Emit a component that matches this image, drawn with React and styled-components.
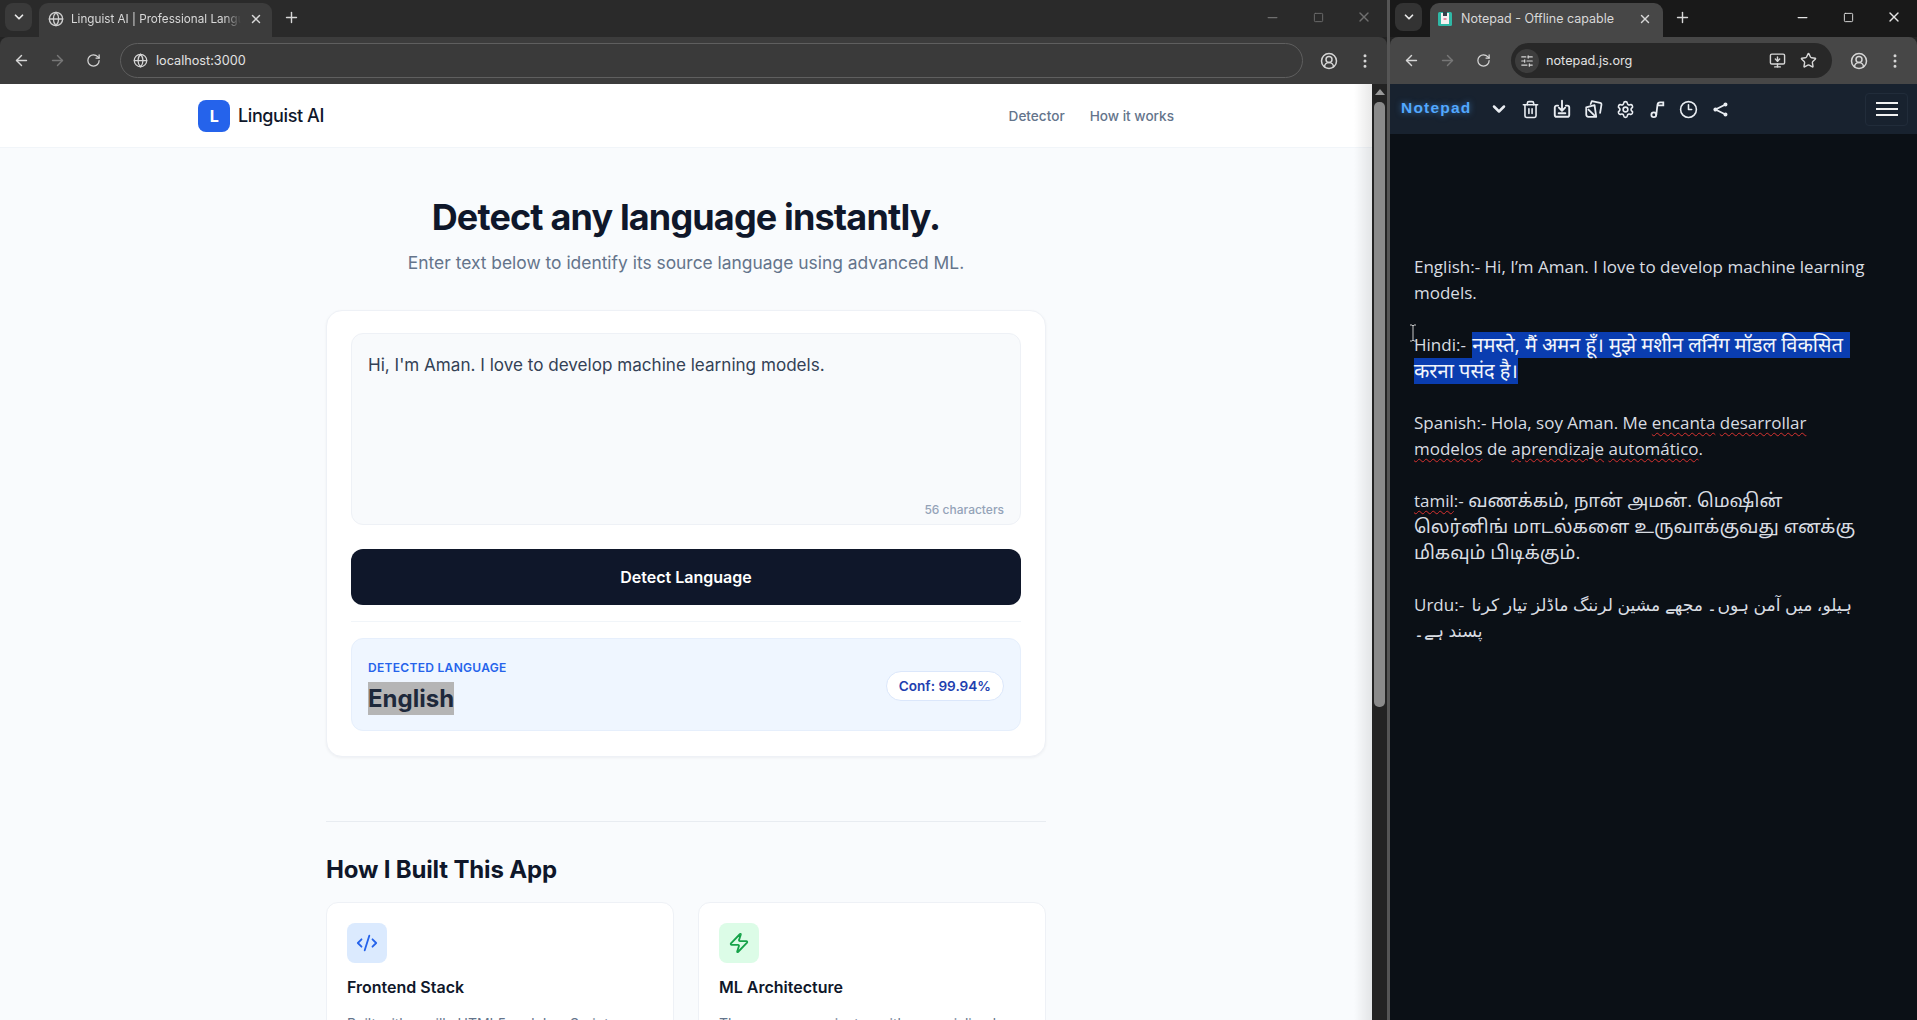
import React from 'react'
import styled, { createGlobalStyle } from 'styled-components'
import {
  ArrowLeft, ArrowRight, RotateCw, Globe, ChevronDown, X, Plus, Minus, Square,
  CircleUserRound, EllipsisVertical, SlidersHorizontal, Star, MonitorDown,
  Trash2, Settings, Clock3, CodeXml, Zap,
} from 'lucide-react'

const GlobalStyle = createGlobalStyle`
  html, body { margin: 0; padding: 0; height: 100%; overflow: hidden; background: #232323; }
  * { box-sizing: border-box; }
`

const Desktop = styled.div`
  display: flex;
  width: 1917px;
  height: 1020px;
  overflow: hidden;
  font-family: Inter, "Liberation Sans", sans-serif;
`

const Window = styled.div`
  display: flex;
  flex-direction: column;
  width: ${(p) => p.$width}px;
  flex: none;
  height: 100%;
`

const Seam = styled.div`
  width: 3px;
  flex: none;
  background: #555;
`

/* browser chrome */
const TabStrip = styled.div`
  display: flex;
  align-items: flex-start;
  height: 37px;
  flex: none;
  padding: 3px 0 0 5px;
  background: ${(p) => p.$bg};
`

const ListBtn = styled.div`
  display: flex;
  align-items: center;
  justify-content: center;
  width: 27px;
  height: 28px;
  flex: none;
  border-radius: 8px;
  color: #e8e8e8;
  background: ${(p) => p.$bg};
`

const Tab = styled.div`
  display: flex;
  align-items: center;
  width: 233px;
  height: 34px;
  flex: none;
  margin-left: ${(p) => p.$left}px;
  padding: ${(p) => p.$pad};
  border-radius: 9px 9px 0 0;
  background: ${(p) => p.$bg};
  color: #d8d8d8;
`

const TabIcon = styled.span`
  display: flex;
  width: 16px;
  margin-right: ${(p) => p.$gap}px;
  flex: none;
  color: #cfcfcf;
`

const TabTitle = styled.span`
  flex: 1;
  min-width: 0;
  overflow: hidden;
  white-space: nowrap;
  font-size: ${(p) => p.$size}px;
  mask-image: ${(p) => (p.$fade ? 'linear-gradient(to right, #000 90%, transparent)' : 'none')};
`

const TabClose = styled.span`
  display: flex;
  margin-left: 8px;
`

const NewTab = styled.span`
  display: flex;
  margin-left: 11px;
  margin-top: 6px;
  color: #d8d8d8;
`

const Caption = styled.div`
  display: flex;
  margin-left: auto;
`

const CaptionBtn = styled.span`
  display: flex;
  align-items: center;
  justify-content: center;
  width: 46px;
  height: 28px;
  color: ${(p) => p.$color};
`

const Toolbar = styled.div`
  display: flex;
  align-items: center;
  height: 47px;
  flex: none;
  padding-left: 3px;
  background: ${(p) => p.$bg};
  border-radius: 8px 8px 0 0;
`

const NavBtn = styled.span`
  display: flex;
  align-items: center;
  justify-content: center;
  width: 36px;
  height: 36px;
  flex: none;
  color: ${(p) => (p.$off ? '#777' : '#d6d6d6')};
`

const Address = styled.div`
  display: flex;
  align-items: center;
  height: 35px;
  width: ${(p) => p.$width}px;
  flex: none;
  margin: 0 ${(p) => p.$right}px 0 ${(p) => p.$left}px;
  padding: 0 12px 0 ${(p) => p.$padLeft}px;
  border-radius: 18px;
  border: ${(p) => (p.$outlined ? '1.5px solid #5f5f5f' : 'none')};
  background: ${(p) => p.$bg};
  color: #e2e2e2;
  font-size: 12.7px;
`

const SiteIcon = styled.span`
  display: flex;
  align-items: center;
  justify-content: center;
  width: 24px;
  height: 24px;
  flex: none;
  margin-right: ${(p) => p.$gap}px;
  border-radius: 50%;
  background: ${(p) => p.$bg || 'transparent'};
  color: #d6d6d6;
`

const AddressActions = styled.span`
  display: flex;
  gap: 14px;
  margin-left: auto;
  padding-right: 3px;
  color: #d6d6d6;
`

/* linguist page */
const Viewport = styled.div`
  display: flex;
  flex: 1;
  min-height: 0;
`

const Page = styled.div`
  position: relative;
  flex: 1;
  overflow: hidden;
  background: #f9fbfd;

  &::after {
    content: '';
    position: absolute;
    top: 0;
    right: 0;
    bottom: 0;
    width: 18px;
    background: linear-gradient(to right, transparent, rgba(0, 0, 0, 0.09));
  }
`

const Scrollbar = styled.div`
  position: relative;
  width: 15px;
  flex: none;
  background: #232323;
`

const ScrollArrow = styled.div`
  position: absolute;
  top: 5px;
  left: 3px;
  width: 0;
  height: 0;
  border-left: 5px solid transparent;
  border-right: 5px solid transparent;
  border-bottom: 6px solid #9a9a9a;
`

const ScrollThumb = styled.div`
  position: absolute;
  top: 18px;
  left: 2px;
  width: 11px;
  height: 605px;
  border-radius: 5px;
  background: #8a8a8a;
`

const Nav = styled.nav`
  height: 64px;
  background: #fff;
  border-bottom: 1px solid #f1f5f9;
`

const NavInner = styled.div`
  display: flex;
  align-items: center;
  justify-content: space-between;
  max-width: 976px;
  height: 100%;
  margin: 0 auto;
`

const Brand = styled.div`
  display: flex;
  align-items: center;
  gap: 8px;
  font-size: 18px;
  font-weight: 500;
  letter-spacing: -0.4px;
  color: #0f172a;
`

const BrandMark = styled.span`
  display: flex;
  align-items: center;
  justify-content: center;
  width: 32px;
  height: 32px;
  border-radius: 8px;
  background: #2563eb;
  color: #fff;
  font-size: 16px;
  font-weight: 700;
`

const NavLinks = styled.div`
  display: flex;
  gap: 25px;
  font-size: 13.6px;
  font-weight: 500;
  color: #64748b;
`

const Main = styled.main`
  width: 720px;
  margin: 0 auto;
  padding-top: 49px;
`

const Title = styled.h1`
  margin: 0;
  font-size: 36px;
  line-height: 40px;
  font-weight: 700;
  letter-spacing: -0.85px;
  text-align: center;
  color: #0f172a;
`

const Subtitle = styled.p`
  margin: 12px 0 33px;
  font-size: 17.4px;
  line-height: 28px;
  text-align: center;
  color: #64748b;
`

const DetectCard = styled.section`
  padding: 22px 24px 25px;
  border: 1px solid #eef1f6;
  border-radius: 16px;
  background: #fff;
  box-shadow: 0 1px 3px rgba(15, 23, 42, 0.05);
`

const TextBox = styled.div`
  position: relative;
  height: 192px;
  padding: 19px 16px;
  border: 1px solid #eef1f6;
  border-radius: 12px;
  background: #f8fafc;
  font-size: 17.1px;
  line-height: 24px;
  color: #334155;
`

const CharCount = styled.span`
  position: absolute;
  right: 16px;
  bottom: 5px;
  font-size: 12px;
  line-height: 18px;
  font-weight: 500;
  color: #94a3b8;
`

const DetectButton = styled.button`
  display: block;
  width: 100%;
  height: 56px;
  margin-top: 24px;
  border: 0;
  border-radius: 12px;
  background: #0f172a;
  color: #fff;
  font-family: inherit;
  font-size: 16px;
  font-weight: 600;
`

const ResultArea = styled.div`
  margin-top: 16px;
  padding-top: 16px;
  border-top: 1px solid #f1f5f9;
`

const ResultPanel = styled.div`
  display: flex;
  align-items: center;
  justify-content: space-between;
  height: 93px;
  padding: 21px 16px 15px;
  border: 1px solid #e6effc;
  border-radius: 12px;
  background: #eff6ff;
`

const ResultLabel = styled.div`
  font-size: 12px;
  line-height: 16px;
  font-weight: 600;
  letter-spacing: 0.3px;
  text-transform: uppercase;
  color: #2563eb;
`

const ResultValue = styled.div`
  display: inline-block;
  margin-top: 6px;
  font-size: 24px;
  line-height: 33px;
  font-weight: 700;
  color: #1e293b;
  background: #b5b5b5;
`

const ConfPill = styled.span`
  display: flex;
  align-items: center;
  height: 30px;
  margin-bottom: 4px;
  padding: 0 12px;
  border: 1px solid #dbe7fb;
  border-radius: 15px;
  background: #fff;
  font-size: 13.6px;
  font-weight: 600;
  color: #1e40af;
`

const BuiltSection = styled.section`
  margin-top: 64px;
  padding-top: 32px;
  border-top: 1px solid #e8ecf1;
`

const BuiltTitle = styled.h2`
  margin: 0 0 16px;
  font-size: 24px;
  line-height: 32px;
  font-weight: 700;
  letter-spacing: -0.17px;
  color: #0f172a;
`

const BuiltGrid = styled.div`
  display: grid;
  grid-template-columns: 1fr 1fr;
  gap: 24px;
`

const BuiltCard = styled.article`
  height: 220px;
  padding: 20px;
  border: 1px solid #eef1f6;
  border-radius: 12px;
  background: #fff;
`

const BuiltIcon = styled.div`
  display: flex;
  align-items: center;
  justify-content: center;
  width: 40px;
  height: 40px;
  border-radius: 8px;
  background: ${(p) => p.$bg};
  color: ${(p) => p.$color};
`

const BuiltName = styled.h3`
  margin: 12px 0 0;
  font-size: 16px;
  line-height: 24px;
  font-weight: 600;
  color: #0f172a;
`

const BuiltText = styled.p`
  margin: 15px 0 0;
  font-size: 14px;
  line-height: 20px;
  color: #64748b;
`

/* notepad page */
const NoteApp = styled.div`
  display: flex;
  flex-direction: column;
  flex: 1;
  min-height: 0;
  background: #0b1016;
`

const NoteBar = styled.div`
  display: flex;
  align-items: center;
  height: 50px;
  flex: none;
  padding: 0 9px 0 11px;
  background: #18222f;
`

const NoteBrand = styled.span`
  width: 71px;
  margin: 0 11px 2px 0;
  flex: none;
  font-family: "Liberation Sans", sans-serif;
  font-size: 15.5px;
  font-weight: 700;
  letter-spacing: 1.2px;
  white-space: nowrap;
  color: #52a8ff;
  text-shadow: 0 0 6px rgba(82, 168, 255, 0.55);
`

const NoteTool = styled.span`
  display: flex;
  align-items: center;
  justify-content: center;
  width: 31.7px;
  height: 32px;
  flex: none;
  color: #e9edf2;
`

const MenuBtn = styled.span`
  display: flex;
  flex-direction: column;
  align-items: center;
  justify-content: center;
  gap: 4px;
  width: 43px;
  height: 33px;
  margin-left: auto;
  border: 1px solid #212c3a;
  border-radius: 4px;
`

const MenuLine = styled.span`
  width: 22px;
  height: 2px;
  background: #f2f2f2;
`

const NoteBody = styled.div`
  position: relative;
  flex: 1;
  padding: 120px 0 0 24px;
  font-family: "Open Sans", "Noto Sans", "Noto Sans Devanagari", "Noto Sans Tamil", "DejaVu Sans", sans-serif;
  font-size: 17px;
  line-height: 26px;
  color: #d9dde2;
`

const NoteLine = styled.div`
  height: 26px;
  white-space: nowrap;
  margin-bottom: ${(p) => (p.$last ? 26 : 0)}px;
`

const Selected = styled.span`
  display: inline-block;
  height: 26px;
  margin-left: ${(p) => p.$left || 0}px;
  padding-right: ${(p) => p.$right || 0}px;
  vertical-align: top;
  font-size: 20px;
  line-height: 26px;
  background: #0a3db0;
  color: #f2f5fb;
`

const Tamil = styled.span`
  font-size: 18.6px;
  line-height: 24px;
`

const Urdu = styled.span`
  margin-left: 3px;
  font-size: 17.2px;
  unicode-bidi: isolate;
`

const Misspelt = styled.span`
  text-decoration: underline wavy #d6322f 1px;
  text-underline-offset: 3px;
`

const TextCursor = styled.svg`
  position: absolute;
  left: 19px;
  top: 190px;
`

const NotepadFavicon = () => (
  <svg width="16" height="16" viewBox="0 0 16 16">
    <rect x="1" y="1" width="14" height="14" rx="1.5" fill="#2fb8a6" />
    <rect x="4" y="2" width="8" height="11" fill="#f4f1f1" />
    <rect x="6" y="1" width="4" height="4" fill="#33404a" />
    <rect x="6.5" y="7" width="3" height="2" fill="#e58aa3" />
  </svg>
)

const ImportIcon = () => (
  <svg width="20" height="20" viewBox="0 0 18 18" fill="none" stroke="currentColor" strokeWidth="1.7" strokeLinecap="round" strokeLinejoin="round">
    <path d="M5.500 6H4.200A1.700 1.700 0 0 0 2.500 7.700v6.600A1.700 1.700 0 0 0 4.200 16h9.600a1.700 1.700 0 0 0 1.700-1.700V7.700A1.700 1.700 0 0 0 13.800 6H12.500" />
    <path d="M9 1.500v8.500M6.200 7.800 9 10.600l2.800-2.800" />
    <path d="M6 12.800h6" />
  </svg>
)

const SheetsIcon = () => (
  <svg width="20" height="20" viewBox="0 0 18 18" fill="none" stroke="currentColor" strokeWidth="1.6" strokeLinejoin="round" strokeLinecap="round">
    <path d="M2 7.500 9.500 5.500 11 16H4A2 2 0 0 1 2 14Z" />
    <path d="M6 4.500 7 2l7.500 1.500a1.500 1.500 0 0 1 1.200 1.800L14.500 12.500" />
    <path d="M4 9.500 9.500 15" />
  </svg>
)

const NoteIcon = () => (
  <svg width="19" height="19" viewBox="0 0 18 18" fill="none" stroke="currentColor" strokeWidth="1.700" strokeLinecap="round">
    <circle cx="5.500" cy="14" r="2.300" />
    <path d="M7.800 14 9 4.500A2.500 2.500 0 0 1 11.500 2.300H14.500V5H10" />
  </svg>
)

const ShareIcon = () => (
  <svg width="15" height="15" viewBox="0 0 18 18" fill="currentColor" stroke="currentColor" strokeWidth="2.200">
    <path d="M15 3 3 9l12 6" fill="none" />
    <circle cx="15" cy="3" r="1.300" />
    <circle cx="3" cy="9" r="1.400" />
    <circle cx="15" cy="15" r="1.300" />
  </svg>
)

function App() {
  return (
    <Desktop>
      <GlobalStyle />
      <Window $width={1387}>
        <TabStrip $bg="#2a2a2a">
          <ListBtn $bg="#3a3a3a"><ChevronDown size={14} strokeWidth={3} /></ListBtn>
          <Tab $bg="#3c3c3c" $left={7} $pad="0 9px 3px 9px">
            <TabIcon $gap={7}><Globe size={16} /></TabIcon>
            <TabTitle $size={11.7} $fade>Linguist AI | Professional Language Detector</TabTitle>
            <TabClose><X size={14} strokeWidth={2.5} /></TabClose>
          </Tab>
          <NewTab><Plus size={17} /></NewTab>
          <Caption>
            <CaptionBtn $color="#6f6f6f"><Minus size={15} /></CaptionBtn>
            <CaptionBtn $color="#6f6f6f"><Square size={11} /></CaptionBtn>
            <CaptionBtn $color="#6f6f6f"><X size={16} /></CaptionBtn>
          </Caption>
        </TabStrip>
        <Toolbar $bg="#3c3c3c">
          <NavBtn><ArrowLeft size={17} /></NavBtn>
          <NavBtn $off><ArrowRight size={17} /></NavBtn>
          <NavBtn><RotateCw size={15} /></NavBtn>
          <Address $width={1183} $left={9} $right={8} $padLeft={7} $outlined $bg="#3a3a3a">
            <SiteIcon $gap={4}><Globe size={15} /></SiteIcon>
            localhost:3000
          </Address>
          <NavBtn><CircleUserRound size={18} /></NavBtn>
          <NavBtn><EllipsisVertical size={18} /></NavBtn>
        </Toolbar>
        <Viewport>
          <Page>
            <Nav>
              <NavInner>
                <Brand><BrandMark>L</BrandMark>Linguist AI</Brand>
                <NavLinks><span>Detector</span><span>How it works</span></NavLinks>
              </NavInner>
            </Nav>
            <Main>
              <Title>Detect any language instantly.</Title>
              <Subtitle>Enter text below to identify its source language using advanced ML.</Subtitle>
              <DetectCard>
                <TextBox>
                  Hi, I'm Aman. I love to develop machine learning models.
                  <CharCount>56 characters</CharCount>
                </TextBox>
                <DetectButton>Detect Language</DetectButton>
                <ResultArea>
                  <ResultPanel>
                    <div>
                      <ResultLabel>Detected Language</ResultLabel>
                      <ResultValue>English</ResultValue>
                    </div>
                    <ConfPill>Conf: 99.94%</ConfPill>
                  </ResultPanel>
                </ResultArea>
              </DetectCard>
              <BuiltSection>
                <BuiltTitle>How I Built This App</BuiltTitle>
                <BuiltGrid>
                  <BuiltCard>
                    <BuiltIcon $bg="#dbeafe" $color="#2563eb"><CodeXml size={22} /></BuiltIcon>
                    <BuiltName>Frontend Stack</BuiltName>
                    <BuiltText>Built with vanilla HTML5 and JavaScript</BuiltText>
                  </BuiltCard>
                  <BuiltCard>
                    <BuiltIcon $bg="#dcfce7" $color="#16a34a"><Zap size={22} /></BuiltIcon>
                    <BuiltName>ML Architecture</BuiltName>
                    <BuiltText>The app communicates with a specialized</BuiltText>
                  </BuiltCard>
                </BuiltGrid>
              </BuiltSection>
            </Main>
          </Page>
          <Scrollbar>
            <ScrollArrow />
            <ScrollThumb />
          </Scrollbar>
        </Viewport>
      </Window>
      <Seam />
      <Window $width={527}>
        <TabStrip $bg="#191919">
          <ListBtn $bg="#333"><ChevronDown size={14} strokeWidth={3} /></ListBtn>
          <Tab $bg="#474747" $left={8} $pad="0 11px 3px 7px">
            <TabIcon $gap={8}><NotepadFavicon /></TabIcon>
            <TabTitle $size={12.5}>Notepad - Offline capable</TabTitle>
            <TabClose><X size={14} strokeWidth={2.5} /></TabClose>
          </Tab>
          <NewTab><Plus size={17} /></NewTab>
          <Caption>
            <CaptionBtn $color="#e4e4e4"><Minus size={15} /></CaptionBtn>
            <CaptionBtn $color="#e4e4e4"><Square size={11} /></CaptionBtn>
            <CaptionBtn $color="#e4e4e4"><X size={16} /></CaptionBtn>
          </Caption>
        </TabStrip>
        <Toolbar $bg="#474747">
          <NavBtn><ArrowLeft size={17} /></NavBtn>
          <NavBtn $off><ArrowRight size={17} /></NavBtn>
          <NavBtn><RotateCw size={15} /></NavBtn>
          <Address $width={321} $left={10} $right={9} $padLeft={4} $bg="#282828">
            <SiteIcon $gap={7} $bg="#3d3d3d"><SlidersHorizontal size={14} /></SiteIcon>
            notepad.js.org
            <AddressActions><MonitorDown size={17} /><Star size={17} /></AddressActions>
          </Address>
          <NavBtn><CircleUserRound size={18} /></NavBtn>
          <NavBtn><EllipsisVertical size={18} /></NavBtn>
        </Toolbar>
        <NoteApp>
          <NoteBar>
            <NoteBrand>Notepad</NoteBrand>
            <NoteTool><ChevronDown size={20} strokeWidth={3} /></NoteTool>
            <NoteTool><Trash2 size={19} strokeWidth={2} /></NoteTool>
            <NoteTool><ImportIcon /></NoteTool>
            <NoteTool><SheetsIcon /></NoteTool>
            <NoteTool><Settings size={19} strokeWidth={2} /></NoteTool>
            <NoteTool><NoteIcon /></NoteTool>
            <NoteTool><Clock3 size={19} strokeWidth={2} /></NoteTool>
            <NoteTool><ShareIcon /></NoteTool>
            <MenuBtn><MenuLine /><MenuLine /><MenuLine /></MenuBtn>
          </NoteBar>
          <NoteBody>
            <NoteLine>English:- Hi, I’m Aman. I love to develop machine learning</NoteLine>
            <NoteLine $last>models.</NoteLine>
            <NoteLine>Hindi:- <Selected $left={2} $right={7}>नमस्ते, मैं अमन हूँ। मुझे मशीन लर्निंग मॉडल विकसित</Selected></NoteLine>
            <NoteLine $last><Selected>करना पसंद है।</Selected></NoteLine>
            <NoteLine>Spanish:- Hola, soy Aman. Me <Misspelt>encanta</Misspelt> <Misspelt>desarrollar</Misspelt></NoteLine>
            <NoteLine $last><Misspelt>modelos</Misspelt> de <Misspelt>aprendizaje</Misspelt> <Misspelt>automático</Misspelt>.</NoteLine>
            <NoteLine><Misspelt>tamil</Misspelt>:- <Tamil>வணக்கம், நான் அமன். மெஷின்</Tamil></NoteLine>
            <NoteLine><Tamil>லெர்னிங் மாடல்களை உருவாக்குவது எனக்கு</Tamil></NoteLine>
            <NoteLine $last><Tamil>மிகவும் பிடிக்கும்.</Tamil></NoteLine>
            <NoteLine>Urdu:- <Urdu>ہیلو، میں آمن ہوں۔ مجھے مشین لرننگ ماڈلز تیار کرنا</Urdu></NoteLine>
            <NoteLine>پسند ہے۔</NoteLine>
            <TextCursor width="8" height="18" viewBox="0 0 8 18" fill="none" stroke="#c8c8c8" strokeWidth="1">
              <path d="M1 1h2l1 1 1-1h2M4 2v14M1 17h2l1-1 1 1h2" />
            </TextCursor>
          </NoteBody>
        </NoteApp>
      </Window>
    </Desktop>
  )
}

export default App
